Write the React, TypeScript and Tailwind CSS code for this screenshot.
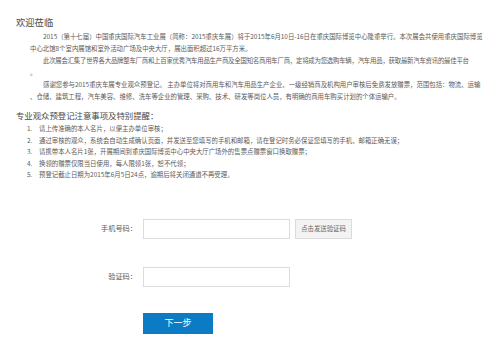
import React from "react";

const font = { fontFamily: '"Noto Sans CJK SC", "Noto Sans", sans-serif' };

export default function App() {
  const body = [
    { indent: true, tight: false, t: "2015（第十七届）中国重庆国际汽车工业展（简称：2015重庆车展）将于2015年6月10日-16日在重庆国际博览中心隆重举行。本次展会共使用重庆国际博览" },
    { indent: false, tight: false, t: "中心北馆8个室内展馆和室外活动广场及中央大厅，展出面积超过16万平方米。" },
    { indent: true, tight: true, t: "此次展会汇集了世界各大品牌整车厂商和上百家优秀汽车用品生产商及全国知名商用车厂商，定将成为您选购车辆，汽车用品，获取最新汽车资讯的最佳平台" },
    { indent: false, tight: false, t: "。" },
    { indent: true, tight: false, t: "感谢您参与2015重庆车展专业观众预登记。 主办单位将对商用车和汽车用品生产企业、一级经销商及机构用户审核后免费发放赠票，范围包括：物流、运输" },
    { indent: false, tight: false, t: "、仓储、建筑工程，汽车美容、维修、洗车等企业的管理、采购、技术、研发等岗位人员，有明确的商用车购买计划的个体运输户。" },
  ];
  const items = [
    "请上传准确的本人名片，以便主办单位审核；",
    "通过审核的观众，系统会自动生成确认页面，并发送至您填写的手机和邮箱，请在登记时务必保证您填写的手机、邮箱正确无误；",
    "请携带本人名片1张，开展期间到重庆国际博览中心中央大厅广场外的售票点赠票窗口换取赠票；",
    "换领的赠票仅限当日使用，每人限领1张，恕不代领；",
    "预登记截止日期为2015年6月5日24点，逾期后将关闭通道不再受理。",
  ];
  return (
    <div className="w-[502px] h-[347px] overflow-hidden bg-white text-[#5a5a5a]" style={font}>
      <div className="pl-[16px] pt-[15px]">
        <div className="text-[9.3px] leading-[14px] text-[#4a4a4a] whitespace-nowrap">欢迎莅临</div>
        <div className="pl-[14px] pt-[2px] text-[6.4px] leading-[12px]">
          {body.map((l, i) => (
            <div key={i} className={`whitespace-nowrap ${l.indent ? "pl-[13px]" : ""} ${l.tight ? "tracking-[-0.22px]" : ""}`}>{l.t}</div>
          ))}
        </div>
        <div className="mt-[5px] text-[8.4px] leading-[14px] text-[#4a4a4a] whitespace-nowrap">专业观众预登记注意事项及特别提醒：</div>
        <div className="pl-[11px] pt-[1px] text-[6.4px] leading-[11.5px]">
          {items.map((t, i) => (
            <div key={i} className="flex whitespace-nowrap">
              <span className="w-[12px]">{i + 1}.</span>
              <span>{t}</span>
            </div>
          ))}
        </div>
      </div>
      <div className="mt-[38px] flex flex-col">
        <div className="flex items-center h-[20px]">
          <div className="w-[137px] text-right text-[7.2px] text-[#5a5a5a]">手机号码：</div>
          <div className="ml-[6px] w-[147px] h-[20px] border border-[#dcdcdc] bg-white"></div>
          <div className="ml-[5px] w-[57px] h-[20px] border border-[#dcdcdc] bg-[#f3f3f3] flex items-center justify-center text-[6.4px] text-[#666] whitespace-nowrap">点击发送验证码</div>
        </div>
        <div className="flex items-center h-[20px] mt-[28px]">
          <div className="w-[137px] text-right text-[7.2px] text-[#5a5a5a]">验证码：</div>
          <div className="ml-[6px] w-[147px] h-[20px] border border-[#dcdcdc] bg-white"></div>
        </div>
        <div className="flex mt-[26px]">
          <div className="ml-[143px] w-[70px] h-[21px] bg-[#0b7cc4] text-white text-[9px] flex items-center justify-center">下一步</div>
        </div>
      </div>
    </div>
  );
}
